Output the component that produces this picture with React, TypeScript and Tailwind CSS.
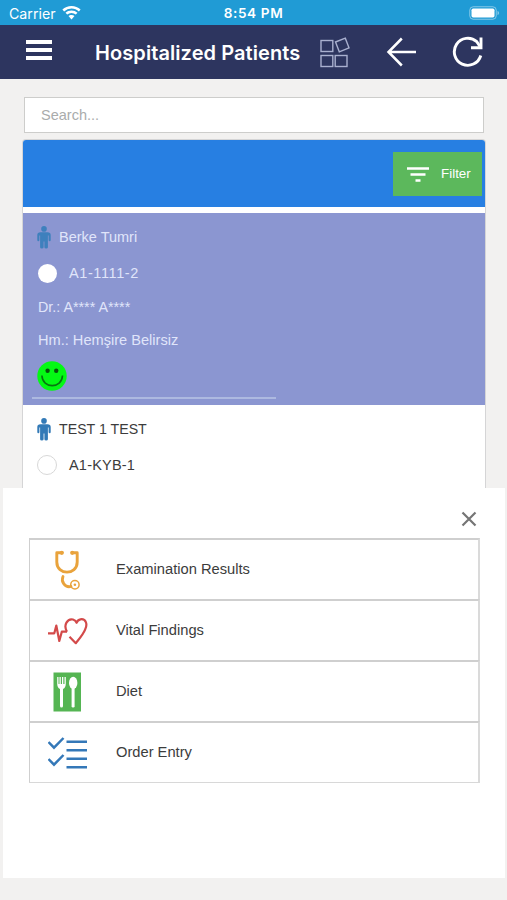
import React from "react";

interface IconProps {
  className?: string;
}

const WifiIcon: React.FC<IconProps> = ({ className }) => (
  <svg viewBox="0 0 19 14" className={className} fill="currentColor">
    <path d="M9.500 0C6 0 2.800 1.300.4 3.500L2.100 5.400A10.900 10.900 0 0 1 9.500 2.500C12.300 2.500 14.900 3.600 16.900 5.400L18.600 3.500A13.500 13.500 0 0 0 9.500 0Z" />
    <path d="M9.500 4.500C7.200 4.500 5.100 5.300 3.500 6.800L5.200 8.600A6.300 6.300 0 0 1 13.800 8.600L15.500 6.800A8.800 8.800 0 0 0 9.500 4.500Z" />
    <path d="M9.500 8.900C8.300 8.900 7.200 9.400 6.500 10.100L9.500 13.400L12.500 10.100A4.500 4.500 0 0 0 9.500 8.900Z" />
  </svg>
);

const BatteryIcon: React.FC<IconProps> = ({ className }) => (
  <svg viewBox="0 0 31 14" className={className}>
    <rect x="0.750" y="0.750" width="26.500" height="12.500" rx="3.500" fill="none" stroke="#fff" strokeOpacity=".45" />
    <rect x="2.500" y="2.500" width="23" height="9" rx="1.700" fill="#fff" />
    <path d="M28.500 5v4c1-.4 1.600-1.200 1.600-2s-.6-1.600-1.600-2Z" fill="#fff" fillOpacity=".45" />
  </svg>
);

const WidgetsIcon: React.FC<IconProps> = ({ className }) => (
  <svg viewBox="0 0 32 32" className={className} fill="none" stroke="#a9b0cf" strokeWidth="1.400">
    <rect x="2" y="4.500" width="11.800" height="11" />
    <rect x="2" y="19.500" width="11.800" height="11" />
    <rect x="16.200" y="19.500" width="11.800" height="11" />
    <path d="M16.500 6L26.300 2.200L30 11.800L20.300 15.800Z" />
  </svg>
);

const BackIcon: React.FC<IconProps> = ({ className }) => (
  <svg viewBox="0 0 32 32" className={className} fill="none" stroke="currentColor" strokeWidth="2.500">
    <path d="M16.800 2.500L3.500 16L16.800 29.500M3.500 16H31" />
  </svg>
);

const ReloadIcon: React.FC<IconProps> = ({ className }) => (
  <svg viewBox="0 0 32 32" className={className} fill="none" stroke="currentColor" strokeWidth="2.900">
    <path d="M29.800 19.500A13.500 13.500 0 1 1 25.800 5.700L29 10.500" />
    <path d="M30 1.500V11.800H20" />
  </svg>
);

const PersonIcon: React.FC<IconProps> = ({ className }) => (
  <svg viewBox="0 0 14 23" className={className} fill="currentColor">
    <circle cx="7" cy="2.900" r="2.800" />
    <path d="M3.500 6.200H10.500Q13.700 6.200 13.700 9V14Q13.700 15.200 12.700 15.200Q11.600 15.200 11.600 14V9.500H10.900V21.300Q10.900 22.500 9.200 22.500Q7.400 22.500 7.400 21.300V15.500H6.600V21.300Q6.600 22.500 4.800 22.500Q3.100 22.500 3.100 21.300V9.500H2.400V14Q2.400 15.200 1.300 15.200Q.3 15.200.3 14V9Q.3 6.200 3.500 6.200Z" />
  </svg>
);

const SmileIcon: React.FC<IconProps> = ({ className }) => (
  <svg viewBox="0 0 30 30" className={className}>
    <circle cx="15" cy="15" r="14.700" fill="#04f914" />
    <circle cx="10.600" cy="9.800" r="2.200" fill="#08520c" />
    <circle cx="19.200" cy="9.800" r="2.200" fill="#08520c" />
    <path d="M4.900 14.500C5.300 28 25.100 28 25.500 14.500" fill="none" stroke="#087610" strokeWidth="1.600" />
  </svg>
);

const StethoscopeIcon: React.FC = () => (
  <svg viewBox="0 0 40 40" className="h-10 w-10" fill="none" stroke="#e9a33c" strokeLinecap="round">
    <path d="M14 2.700H8.800V12C8.800 25.500 29.200 25.500 29.200 12V2.700H24.500" strokeWidth="2.900" strokeLinejoin="round" />
    <circle cx="13.800" cy="2.800" r="2.100" fill="#e9a33c" stroke="none" />
    <circle cx="24.200" cy="2.800" r="2.100" fill="#e9a33c" stroke="none" />
    <path d="M15 26.500C12.800 31.500 16.800 38 23 36.500" strokeWidth="2.800" />
    <circle cx="26.900" cy="34.700" r="4.200" strokeWidth="1.500" />
    <circle cx="26.900" cy="34.700" r="1.300" fill="#e9a33c" stroke="none" />
  </svg>
);

const HeartbeatIcon: React.FC = () => (
  <svg viewBox="0 0 40 40" className="h-10 w-10" fill="none" stroke="#d34a4a" strokeLinejoin="round">
    <path d="M0 22.300H6.300L8.300 14.500L11.300 30L13.800 20.700H19" strokeWidth="2.200" />
    <path d="M19 20.700C15 14 19.500 7.200 25 8.500Q27.800 9.300 28.500 11.800Q29.700 8.800 32.500 8.300C38 7.500 39.700 13.200 37.200 18.300C35.400 23 31.500 27.500 27.800 32.200L21.500 25.700" strokeWidth="2.200" />
  </svg>
);

const DietIcon: React.FC = () => (
  <svg viewBox="0 0 40 40" className="h-10 w-10">
    <rect x="5.500" y="0.500" width="27.500" height="39" fill="#55b553" />
    <path d="M9.200 5V11.800Q9.200 15.700 12 17V34Q12 35.600 13.500 35.600Q15 35.600 15 34V17Q17.800 15.700 17.800 11.800V5H16.500V12H15.300V5H14V12H12.800V5H11.500V12H10.500V5Z" fill="#fff" />
    <ellipse cx="25.200" cy="10.900" rx="4.200" ry="6.100" fill="#fff" />
    <rect x="23.600" y="15" width="3" height="20.600" rx="1.400" fill="#fff" />
  </svg>
);

const OrderIcon: React.FC = () => (
  <svg viewBox="0 0 40 40" className="h-10 w-10" fill="none" stroke="#3478b8" strokeWidth="2.500">
    <path d="M0.500 9L6 14.700L15.500 5M0.500 26L6 31.700L15.500 22" />
    <path d="M18.500 8.800H39M18.500 17.300H39M18.500 25.800H39M18.500 34.300H39" />
  </svg>
);

const menuItems = [
  { label: "Examination Results", Icon: StethoscopeIcon },
  { label: "Vital Findings", Icon: HeartbeatIcon },
  { label: "Diet", Icon: DietIcon },
  { label: "Order Entry", Icon: OrderIcon },
];

const StatusBar: React.FC = () => (
  <div className="grid h-[25px] grid-cols-3 items-center bg-[#209bd5] px-[9px] pt-[3px] font-['Inter',sans-serif] text-white">
    <div className="flex items-center gap-[6px]">
      <span className="text-[14.2px] leading-none">Carrier</span>
      <WifiIcon className="-mt-[2px] h-[14px] w-[19px]" />
    </div>
    <span className="text-center text-[13.6px] leading-none font-semibold tracking-[0.6px] whitespace-nowrap">
      8:54 PM
    </span>
    <BatteryIcon className="-mt-[2px] -mr-[2px] h-[14px] w-[31px] justify-self-end" />
  </div>
);

const Header: React.FC = () => (
  <header className="flex h-[54px] items-center bg-[#2d355f] pl-[26px] text-white">
    <button className="mr-[43px] flex w-[26px] flex-col gap-[4px] pb-[4px]">
      <span className="h-[4px] w-full bg-white" />
      <span className="h-[4px] w-full bg-white" />
      <span className="h-[4px] w-full bg-white" />
    </button>
    <h1 className="w-[224px] pt-[2px] font-['Inter',sans-serif] text-[20px] font-semibold tracking-[0.08px] whitespace-nowrap">
      Hospitalized Patients
    </h1>
    <WidgetsIcon className="h-8 w-8" />
    <BackIcon className="ml-[34px] h-8 w-8" />
    <ReloadIcon className="ml-[34px] h-8 w-8" />
  </header>
);

const SelectedPatient: React.FC = () => (
  <article className="h-[192px] bg-[#8b96d1] pt-[12px] pl-[14px] text-[#e0e5fa]">
    <div className="flex h-[24px] items-center gap-[8px] text-[14.5px]">
      <PersonIcon className="h-[23px] w-[14px] text-[#3e80bd]" />
      <span className="pt-[2px]">Berke Tumri</span>
    </div>
    <div className="mt-[12px] flex h-[24px] items-center gap-[12px] pl-px text-[14.5px]">
      <span className="h-[19px] w-[19px] rounded-full bg-white" />
      <span className="pt-[2px] tracking-[0.6px]">A1-1111-2</span>
    </div>
    <p className="mt-[10px] h-[24px] pl-px text-[14.3px] leading-[24px]">Dr.: A**** A****</p>
    <p className="mt-[9px] h-[24px] pl-px text-[14.6px] leading-[24px]">Hm.: Hemşire Belirsiz</p>
    <SmileIcon className="mt-[9px] h-[30px] w-[30px]" />
    <div className="mt-[6px] -ml-[5px] h-[2px] w-[244px] bg-[#adb9e0]" />
  </article>
);

const NextPatient: React.FC = () => (
  <article className="h-[83px] pt-[12px] pl-[14px] text-[#3c3c3c]">
    <div className="flex h-[24px] items-center gap-[8px] text-[14.2px]">
      <PersonIcon className="h-[23px] w-[14px] text-[#337ab7]" />
      <span className="pt-px">TEST 1 TEST</span>
    </div>
    <div className="mt-[12px] flex h-[24px] items-center gap-[12px] text-[14.5px]">
      <span className="h-[20px] w-[20px] rounded-full border border-[#d8d8d8] bg-white" />
      <span className="pt-[2px] tracking-[0.2px]">A1-KYB-1</span>
    </div>
  </article>
);

const ActionSheet: React.FC = () => (
  <section className="mr-[2px] ml-[3px] h-[390px] bg-white px-[25px] pt-[20px]">
    <div className="flex h-[30px] items-start justify-end">
      <svg viewBox="0 0 16 16" className="mt-[3px] mr-[3px] h-4 w-4">
        <path d="M1.500 1.500L14.500 14.500M14.500 1.500L1.500 14.500" fill="none" stroke="#757575" strokeWidth="2.200" />
      </svg>
    </div>
    <ul>
      {menuItems.map(({ label, Icon }) => (
        <li
          key={label}
          className="ml-px flex h-[61px] items-center border-t-2 border-r-2 border-l border-t-[#cfcfcf] border-r-[#dadada] border-b-[#d8d8d8] border-l-[#cfcfcf] pl-[18px] text-[14.7px] text-[#3c3c3c] last:h-[62px] last:border-b"
        >
          <Icon />
          <span className="ml-[28px]">{label}</span>
        </li>
      ))}
    </ul>
  </section>
);

const App: React.FC = () => {
  return (
    <div className="h-[900px] w-[507px] overflow-hidden bg-[#f2f1f0] font-['Liberation_Sans',sans-serif]">
      <StatusBar />
      <Header />

      <main>
        {/* Search */}
        <div className="px-[24px] pt-[18px]">
          <input
            type="text"
            placeholder="Search..."
            className="block h-[36px] w-[460px] border border-[#cdcdcb] bg-white px-[16px] text-[14.5px] placeholder:text-[#aaacac]"
          />
        </div>

        {/* Patient list */}
        <div className="mt-[6px] mr-[21px] ml-[22px] rounded-t-[4px] border-x border-t border-[#d5d5d6] bg-white">
          <div className="flex h-[67px] items-center justify-end rounded-t-[3px] bg-[#277fe2] pr-[3px]">
            <button className="mt-px flex h-[44px] w-[89px] items-center bg-[#5cb85c] pl-[14px] text-[13.4px] text-white">
              <svg viewBox="0 0 22 16" className="h-4 w-[22px]">
                <path d="M0 2.500H22M3.500 8.500H18.500M8.500 14.500H13.500" stroke="#fff" strokeWidth="2.700" />
              </svg>
              <span className="ml-[12px]">Filter</span>
            </button>
          </div>
          <div className="h-[6px] bg-white" />
          <SelectedPatient />
          <NextPatient />
        </div>

        <ActionSheet />
      </main>
    </div>
  );
};

export default App;
